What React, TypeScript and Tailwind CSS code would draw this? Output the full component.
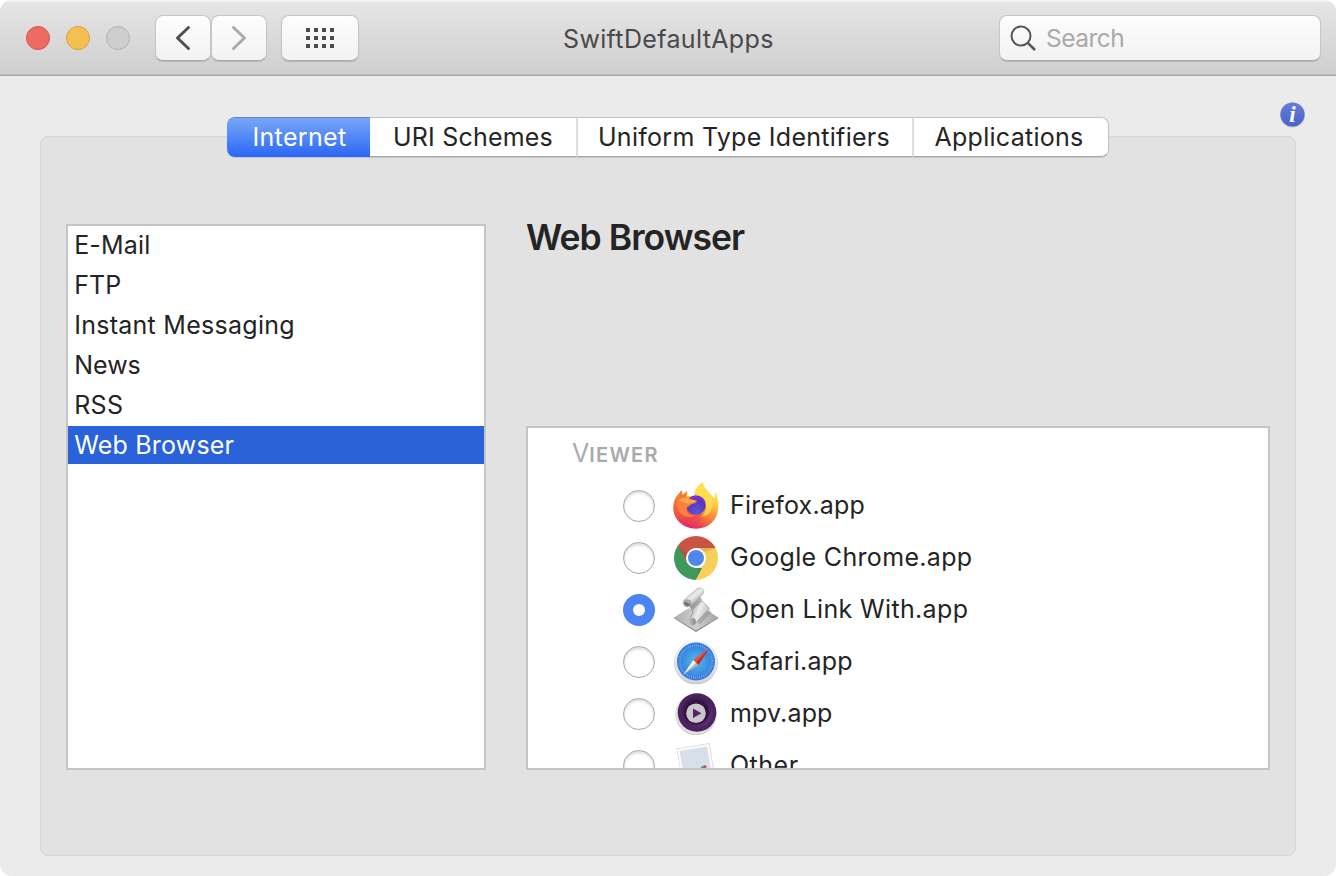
import React from "react";

const categories = [
  { name: "E-Mail", spacing: "tracking-[0.15px]" },
  { name: "FTP", spacing: "tracking-[0.1px]" },
  { name: "Instant Messaging", spacing: "tracking-[0.27px]" },
  { name: "News", spacing: "tracking-[0px]" },
  { name: "RSS", spacing: "tracking-[0.3px]" },
  { name: "Web Browser", spacing: "tracking-[0.2px]" },
];

function Firefox() {
  return (
    <svg width="48" height="48" viewBox="0 0 48 48">
      <defs>
        <linearGradient id="ffBody" x1=".8" y1=".05" x2=".4" y2="1">
          <stop offset="0" stopColor="#fff060" />
          <stop offset=".35" stopColor="#ffc944" />
          <stop offset=".7" stopColor="#f8743a" />
          <stop offset="1" stopColor="#db2070" />
        </linearGradient>
        <linearGradient id="ffLeft" x1=".2" y1="0" x2=".6" y2="1">
          <stop offset="0" stopColor="#f28a35" />
          <stop offset=".55" stopColor="#f4503e" />
          <stop offset="1" stopColor="#e22a62" stopOpacity="0" />
        </linearGradient>
        <radialGradient id="ffGlobe" cx=".55" cy=".85" r=".9">
          <stop offset="0" stopColor="#5a57dc" />
          <stop offset=".6" stopColor="#5b35bd" />
          <stop offset="1" stopColor="#8a30d8" />
        </radialGradient>
      </defs>
      <path d="M30.700 0c.8 4.500 4 8 7.300 11.500 2 2 3.500 3.500 4.200 5 .9-2.500 1-5 .8-7.500 2.800 5 3.500 10.500 3.400 16C46 38 36.500 46.700 24 46.700S1.400 37.500 1.400 25.500c0-6 2.400-10.500 5.600-14L9.700 8l.8 5 4.800-4v5c3 0 5 .5 7 1 0-7 3-11.500 8.400-15z" fill="url(#ffBody)" />
      <path d="M9.700 8 7 11.500C3.500 15 1.400 20 1.400 25.500c0 12 9.500 20.500 21 21.200L34 32H20l-6-17.500 1.300-5.500-4.800 4z" fill="url(#ffLeft)" />
      <path d="M22.300 14.500C22.500 8 26 3 30.700 0c.8 4.500 4 8 7 12 3 4 4 9 2.500 14-2 6-7 9-12 8.500 8-3 8-15 .5-18.500-2-1-4-1.500-6.400-1.500z" fill="#ffe052" opacity=".75" />
      <circle cx="24" cy="23" r="9.800" fill="url(#ffGlobe)" />
      <path d="M5 19c3-3.500 6.500-4.800 10-3.500 2.500.9 5 2.300 8.500 2.800 1 .2 1.500.4 1.500 1.200-1.500 2-5 2-6.500 3.500-2 2-3.500 1.800-4 3.500 0 5.500 5 7.500 9.500 6.300-6 4.200-14 2.200-17.500-4.800-1-3-2-6-1.500-9z" fill="#fa803b" />
      <path d="M7 18c4-2.800 7-2.500 10-1l7 2c-2 1.500-5 1.500-7 2.500-4 .5-7-2.500-10-3.500z" fill="#ffad43" />
    </svg>
  );
}

function Chrome() {
  return (
    <svg width="48" height="48" viewBox="0 0 48 48">
      <defs><clipPath id="chromeDisc"><circle cx="24" cy="24" r="22" /></clipPath></defs>
      <g clipPath="url(#chromeDisc)">
        <path d="M0 0h48v14H24L15.300 29 5 11z" fill="#c85442" />
        <path d="M0 12h6.500l8.800 17L24 34h6.700L23 48H0z" fill="#41985f" />
        <path d="M24 14h24v34H22.500l10.200-19z" fill="#f7d05c" />
        <path d="M24 14h21l-13 4zM6 13l9.300 16 1-8zM24 46l8.700-17-7 6z" fill="#713b1c" opacity=".18" />
      </g>
      <circle cx="24" cy="24" r="10" fill="#fff" />
      <circle cx="24" cy="24" r="8" fill="#4e88ed" />
    </svg>
  );
}

function Script() {
  return (
    <svg width="48" height="48" viewBox="0 0 48 48">
      <defs>
        <linearGradient id="paper" x1=".1" y1=".3" x2=".9" y2=".75">
          <stop stopColor="#a19fa2" /><stop offset=".5" stopColor="#efeeef" /><stop offset="1" stopColor="#bab8ba" />
        </linearGradient>
        <linearGradient id="roll" x1=".2" y1=".1" x2=".8" y2=".8"><stop stopColor="#bab8bb" /><stop offset=".5" stopColor="#eeedee" /><stop offset="1" stopColor="#989699" /></linearGradient>
        <linearGradient id="tile" x2="1"><stop stopColor="#b0b0b0" /><stop offset=".5" stopColor="#cecece" /><stop offset="1" stopColor="#a2a2a2" /></linearGradient>
      </defs>
      <path d="m2 31.500 14-9h16l14.300 9L24 45z" fill="url(#tile)" />
      <path d="m2 31.500 22 13.300 22.300-13.300v.8L24 46 2 32.300z" fill="#777" />
      <path d="m25 35.500 12.500-12 2 3-12 12z" fill="#777" opacity=".35" />
      <path d="m17 18 10.500-9c.5 5 5.500 8.500 10 13.500L25 35.500c-2 2.500-7 2-7-1.500 0-4 4-6 2.500-9-.7-1.500-2.500-4-3.500-7z" fill="url(#paper)" stroke="#8f8d90" strokeWidth=".6" />
      <path d="m18.500 21 9.500-9.500c.5 1.500 1 2.500 2 4L20.500 24z" fill="#777578" opacity=".45" />
      <path d="M12 14 25 2.600c3-1.600 6.500-.4 6.800 2.400.1 2-1 3.500-2.300 4.500L19 19.500c-2 2-5 1.800-6.500.3-1.700-1.800-1.800-4.200-.5-5.800z" fill="url(#roll)" stroke="#99979a" strokeWidth=".5" />
      <ellipse cx="15.300" cy="17" rx="3.900" ry="3.700" fill="#aaa8ab" />
      <path d="M12 17.500c1 3 6 3.500 7-.5-1.500 1.300-3 1-3.700-.3-.8-1.200-2.800-1-3.300.8z" fill="#747276" />
      <ellipse cx="21" cy="35.500" rx="2.900" ry="3.800" fill="#aaa8ab" />
      <path d="M20 34.500c2-1 3 2 .5 4 2.500.3 3.500-2.500 2.700-4-.8-1.300-2.400-1.200-3.200 0z" fill="#858387" />
    </svg>
  );
}

function Safari() {
  return (
    <svg width="48" height="48" viewBox="0 0 48 48">
      <defs>
        <radialGradient id="compass"><stop stopColor="#52bdeb" /><stop offset="1" stopColor="#3377dc" /></radialGradient>
        <linearGradient id="safariRim" x2="0" y2="1"><stop stopColor="#f7f7f7" /><stop offset="1" stopColor="#d5d5d5" /></linearGradient>
      </defs>
      <circle cx="24" cy="24.500" r="21.800" fill="#b5b5b5" />
      <circle cx="24" cy="24" r="21.700" fill="url(#safariRim)" />
      <circle cx="24" cy="23.500" r="19" fill="url(#compass)" />
      <circle cx="24" cy="23.500" r="16.300" fill="none" stroke="#b4dcfa" strokeWidth="2.500" strokeDasharray=".6 1.530" opacity=".65" />
      <path d="m11.500 36.500 10-14.500 5 5z" fill="#a9b8bd" />
      <path d="m11.500 36.500 10-14.500 2.500 2.500z" fill="#fff" />
      <path d="M37 10.500 21.500 22l5 5z" fill="#bf292b" />
      <path d="M37 10.500 21.500 22l2.500 2.500z" fill="#f05345" />
    </svg>
  );
}

function Mpv() {
  return (
    <svg width="48" height="48" viewBox="0 0 48 48">
      <defs><linearGradient id="purple" x2="1" y2="1"><stop stopColor="#39184a" /><stop offset=".6" stopColor="#4c2260" /><stop offset="1" stopColor="#6b3280" /></linearGradient></defs>
      <circle cx="24" cy="24.500" r="20.500" fill="#b5b5b5" />
      <circle cx="24" cy="24" r="20.500" fill="#e1e0e1" />
      <circle cx="25" cy="22.500" r="19.300" fill="#4c2261" />
      <circle cx="25.500" cy="22" r="15.500" fill="url(#purple)" />
      <circle cx="24.500" cy="22" r="12.500" fill="#32143f" />
      <circle cx="24" cy="23.200" r="9.800" fill="#cac6cb" />
      <path d="m21 18.500 8.500 4.700-8.500 4.800z" fill="#552563" />
    </svg>
  );
}

function Other() {
  return (
    <svg width="48" height="48" viewBox="0 0 48 48">
      <path d="m4.500 6.500 33-5.500 7 42-33 5z" fill="#d4d4d4" />
      <path d="m5.200 7 31.700-5.200 7 42-32 4.200z" fill="#fafafa" />
      <path d="m7.500 9 27.500-4.500 6 36-27 4z" fill="#d7e0e8" />
      <path d="m23 32 4-4 3-4 4 1 2 8-12 3z" fill="#85808a" />
      <path d="m31 24 2-1 2 2-3 1z" fill="#c6503c" />
    </svg>
  );
}

const apps = [
  { name: "Firefox.app", icon: Firefox, spacing: "tracking-[0.2px]" },
  { name: "Google Chrome.app", icon: Chrome, spacing: "tracking-[0.32px]" },
  { name: "Open Link With.app", icon: Script, spacing: "tracking-[0.35px]", selected: true },
  { name: "Safari.app", icon: Safari, spacing: "tracking-[0.2px]" },
  { name: "mpv.app", icon: Mpv, spacing: "tracking-[0.15px]" },
  { name: "Other", icon: Other, spacing: "tracking-[0.5px]" },
];

const control = "flex h-[46px] items-center rounded-[8px] border border-[#c7c7c7] border-b-[#a6a6a6] bg-linear-to-b from-[#fdfdfd] to-[#f2f2f2] shadow-[0_1px_1px_rgba(0,0,0,0.12)]";
const tab = "shrink-0 border-t border-b border-t-[#c2c2c2] border-b-[#a5a5a5] leading-[38px]";

export default function App() {
  return (
    <div className="h-[876px] w-[1336px] bg-white font-['Inter',sans-serif] text-[25px] text-[#242424]">
      <div className="flex h-full flex-col overflow-hidden rounded-[12px] bg-[#ebebeb]">
        <header className="flex h-[76px] shrink-0 border-t-2 border-b border-t-[#f3f3f3] border-b-[#a5a5a5] bg-linear-to-b from-[#e5e5e5] to-[#cfcfcf] pt-[13px] shadow-[inset_0_-1px_0_#bdbdbd]">
          <div className="ml-[26px] flex h-[46px] w-[129px] items-center gap-4">
            <div className="size-6 rounded-full border border-[#d95249] bg-[#ed6b60]" />
            <div className="size-6 rounded-full border border-[#d7a13d] bg-[#f5c04f]" />
            <div className="size-6 rounded-full border border-[#b1b1b1] bg-[#cecece]" />
          </div>
          <button className={`${control} w-14 justify-center`}>
            <svg width="16" height="26" viewBox="0 0 16 26" fill="none" stroke="#505050" strokeWidth="3" strokeLinecap="round" strokeLinejoin="round"><path d="M13.500 2.500 2.500 13l11 10.500" /></svg>
          </button>
          <button className={`${control} w-14 justify-center`}>
            <svg width="16" height="26" viewBox="0 0 16 26" fill="none" stroke="#aaa" strokeWidth="3" strokeLinecap="round" strokeLinejoin="round"><path d="m2.500 2.500 11 10.500-11 10.500" /></svg>
          </button>
          <button className={`${control} ml-[14px] w-[78px] justify-center`}>
            <div className="grid grid-cols-4 gap-1">
              {Array.from({ length: 12 }, (_, i) => <i key={i} className="size-1 bg-[#4b4b4b]" />)}
            </div>
          </button>
          <div className="ml-[204px] w-[436px] pt-[6px] leading-[36px] tracking-[0.35px] text-[#494949]">SwiftDefaultApps</div>
          <div className={`${control} w-[322px] pl-[10px] text-[#aaa]`}>
            <svg width="28" height="28" viewBox="0 0 28 28" fill="none" stroke="#555" strokeWidth="2"><circle cx="11" cy="12" r="9.500" /><path d="m17.800 18.800 7.200 7.200" strokeWidth="2.500" /></svg>
            <span className="ml-[8px] text-[24.500px] leading-[36px] tracking-[-0.5px]">Search</span>
          </div>
        </header>
        <main className="flex min-h-0 flex-1 flex-col px-10 pb-5">
          <div className="z-10 -mb-[21px] flex h-[81px] shrink-0 items-start pt-[41px]">
            <nav className="ml-[187px] flex h-10 w-[882px] shrink-0 rounded-[8px] bg-white text-center shadow-[0_1px_1px_rgba(0,0,0,.12)]">
              <button className="w-[143px] shrink-0 rounded-l-[8px] border-t border-[#5685de] bg-linear-to-b from-[#78a5f6] to-[#2a66f5] pl-[2px] leading-[39px] tracking-[0.35px] text-white">Internet</button>
              <button className={`${tab} w-[208px] border-r-2 border-r-[#dedede] tracking-[0.2px]`}>URI Schemes</button>
              <button className={`${tab} w-[336px] border-r-2 border-r-[#dedede] pr-[2px] tracking-[0.28px]`}>Uniform Type Identifiers</button>
              <button className={`${tab} w-[195px] rounded-r-[8px] border-r border-r-[#c2c2c2] pr-[4px] tracking-[0.28px]`}>Applications</button>
            </nav>
            <svg className="-mt-[16px] ml-[169px] shrink-0" width="28" height="28" viewBox="0 0 28 28">
              <defs><linearGradient id="info" x2="0" y2="1"><stop stopColor="#657cda" /><stop offset="1" stopColor="#4963ce" /></linearGradient></defs>
              <circle cx="14.500" cy="14" r="12.500" fill="#777" opacity=".4" /><circle cx="14.500" cy="13.500" r="12" fill="url(#info)" />
              <text x="14.500" y="20.500" textAnchor="middle" fill="white" fontFamily="Liberation Serif, serif" fontSize="23" fontWeight="bold" fontStyle="italic">i</text>
            </svg>
          </div>
          <section className="flex min-h-0 flex-1 rounded-[8px] border border-[#d7d7d7] bg-[#e2e2e2] pt-[87px] pl-[25px]">
            <ul className="h-[546px] w-[420px] border-2 border-[#c5c5c5] bg-white">
              {categories.map((item, i) => (
                <li key={item.name} className={`mb-[2px] h-[38px] pl-[6.200px] leading-[38px] ${item.spacing} ${i === 5 ? "bg-[#2962d9] text-white" : ""}`}>{item.name}</li>
              ))}
            </ul>
            <div className="ml-10 w-[744px]">
              <h1 className="h-[202px] pt-[2px] text-[35.500px] leading-[24px] font-semibold tracking-[-0.950px]">Web Browser</h1>
              <div className="h-[344px] overflow-hidden border-2 border-[#c5c5c5] bg-white">
                <h2 className="h-[52px] pl-[44px] leading-[50px] font-normal text-[#aaa]"><span>V</span><span className="text-[20px] font-semibold tracking-[1.250px]">IEWER</span></h2>
                {apps.map(({ name, icon: Icon, spacing, selected }) => (
                  <div key={name} className="flex h-[52px] items-center pl-[95px]">
                    <div className={`flex size-8 shrink-0 items-center justify-center rounded-full ${selected ? "bg-[#4c84f4]" : "border border-[#a9a9a9] bg-white shadow-[inset_0_2px_3px_rgba(0,0,0,.15)]"}`}>
                      {selected && <i className="size-[12px] rounded-full bg-white" />}
                    </div>
                    <div className="ml-[17px] w-[58px]"><Icon /></div>
                    <span className={`whitespace-nowrap ${spacing}`}>{name}</span>
                  </div>
                ))}
              </div>
            </div>
          </section>
        </main>
      </div>
    </div>
  );
}
